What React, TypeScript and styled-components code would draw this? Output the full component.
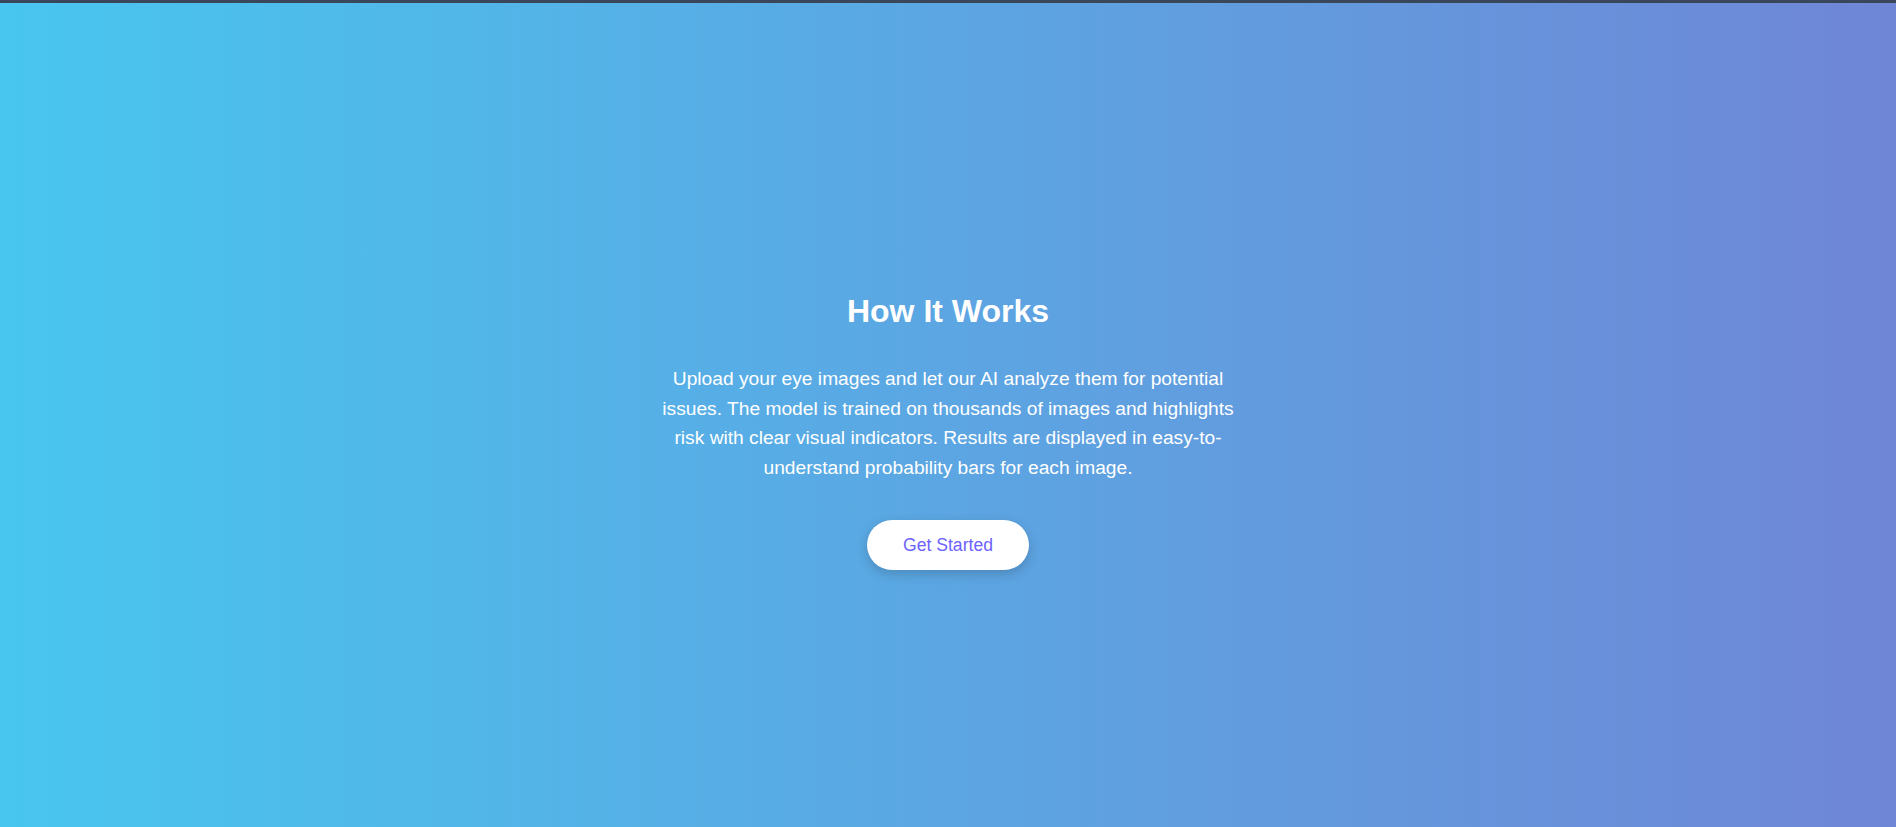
import React from "react";
import styled, { createGlobalStyle } from "styled-components";

const Global = createGlobalStyle`
  html, body { margin: 0; padding: 0; }
  body { font-family: "Liberation Sans", Arial, sans-serif; overflow: hidden; }
  * { box-sizing: border-box; }
`;

const Page = styled.div`
  display: flex;
  flex-direction: column;
  height: 827px;
`;

const TopBar = styled.div`
  height: 3px;
  flex: none;
  background: #3a4659;
`;

const Hero = styled.section`
  flex: 1;
  display: flex;
  flex-direction: column;
  align-items: center;
  padding-top: 290px;
  background: linear-gradient(to right, #48c6ef 0%, #6f86d6 100%);
  color: #ffffff;
  text-align: center;
`;

const Title = styled.h2`
  margin: 0;
  font-size: 32px;
  line-height: 37px;
  font-weight: 700;
`;

const Text = styled.p`
  margin: 34px 0 0;
  max-width: 600px;
  font-size: 19.2px;
  line-height: 29.6px;
`;

const Button = styled.button`
  margin-top: 38px;
  padding: 15px 36px;
  border: none;
  border-radius: 30px;
  background: #ffffff;
  color: #6c63ff;
  font-family: "Liberation Sans", Arial, sans-serif;
  font-size: 17.6px;
  line-height: 20px;
  cursor: pointer;
  box-shadow: 0 4px 12px rgba(0, 0, 0, 0.18);
`;

export default function App() {
  return (
    <>
      <Global />
      <Page>
        <TopBar />
        <Hero>
          <Title>How It Works</Title>
          <Text>
            Upload your eye images and let our AI analyze them for potential
            issues. The model is trained on thousands of images and highlights
            risk with clear visual indicators. Results are displayed in
            easy-to-understand probability bars for each image.
          </Text>
          <Button>Get Started</Button>
        </Hero>
      </Page>
    </>
  );
}
